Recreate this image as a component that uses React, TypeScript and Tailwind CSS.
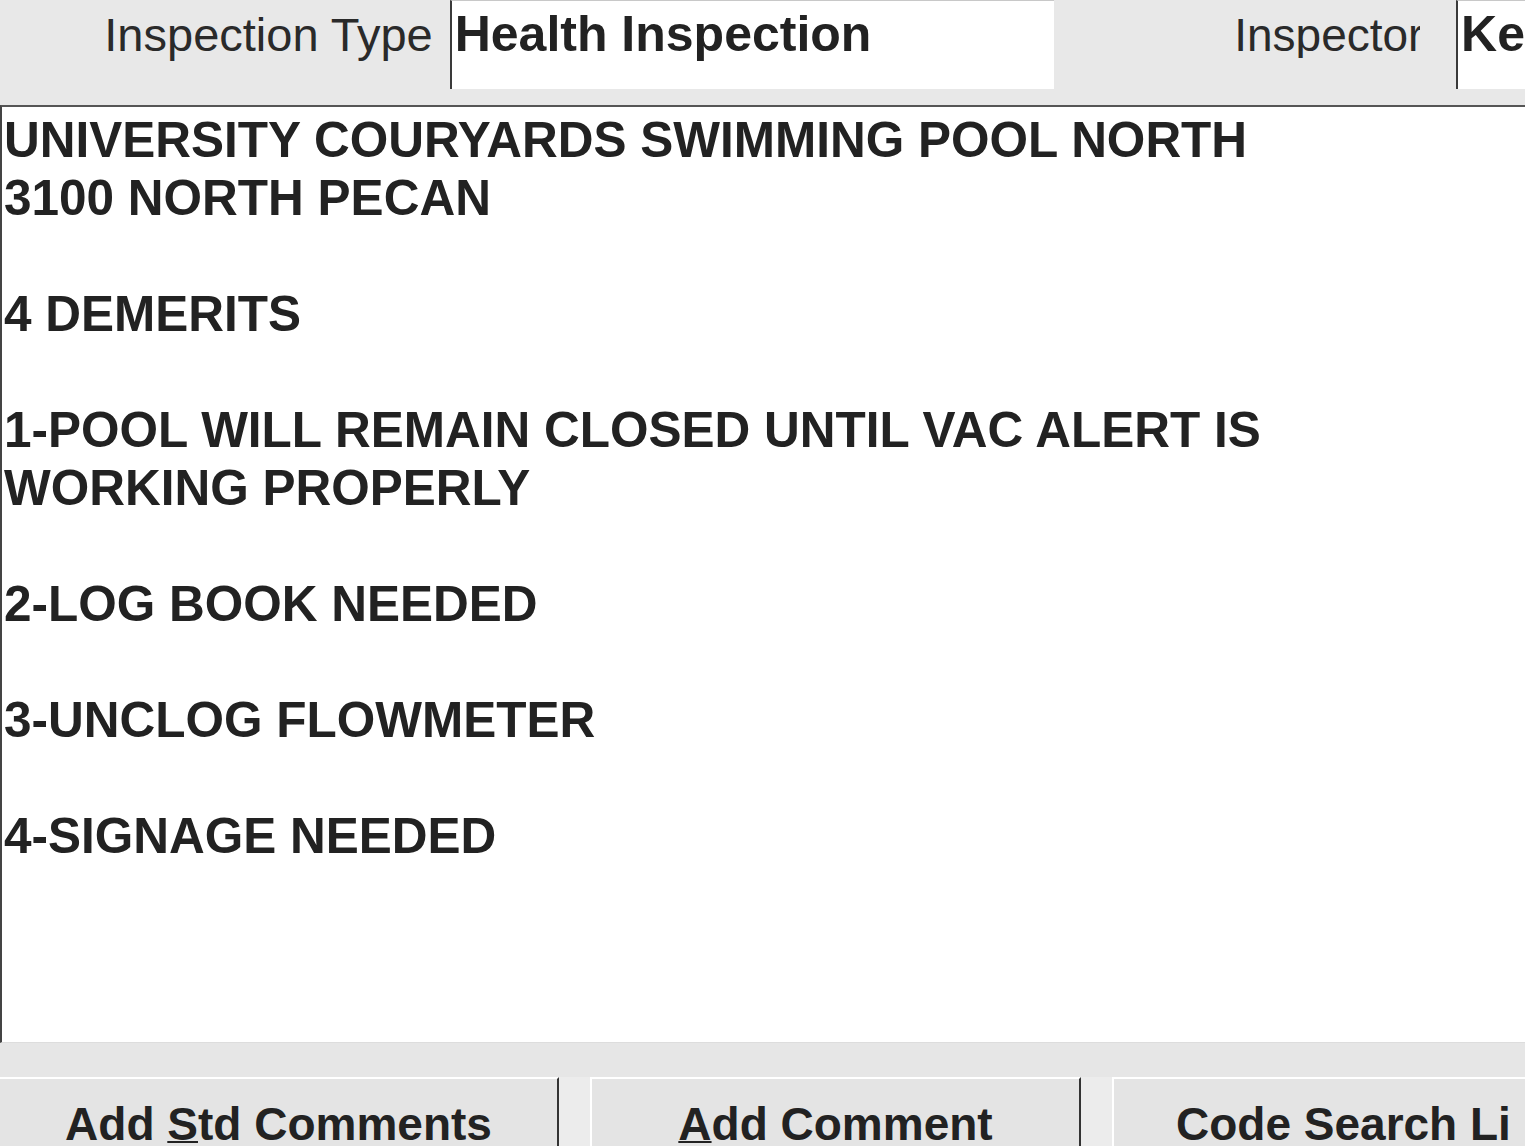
const lines = [
  'UNIVERSITY COURYARDS SWIMMING POOL NORTH',
  '3100 NORTH PECAN',
  '',
  '4 DEMERITS',
  '',
  '1-POOL WILL REMAIN CLOSED UNTIL VAC ALERT IS',
  'WORKING PROPERLY',
  '',
  '2-LOG BOOK NEEDED',
  '',
  '3-UNCLOG FLOWMETER',
  '',
  '4-SIGNAGE NEEDED',
];

const App = () => {
  return (
    <div className="w-[1525px] h-[1146px] overflow-hidden bg-[#e8e8e8] flex flex-col font-['Liberation_Sans',Arial,sans-serif] text-[#222]">
      <div className="h-[105px] flex items-start shrink-0">
        <div className="w-[450px] pr-[17px] pt-[12px] text-right text-[47px] leading-[46px] whitespace-nowrap text-[#2a2a2a]">
          Inspection Type
        </div>
        <div className="w-[605px] h-[89px] bg-white border-l-2 border-l-[#3a3a3a] border-t border-t-[#c8c8c8] pl-[3px] pt-[9px] text-[50px] leading-[49px] font-bold whitespace-nowrap">
          Health Inspection
        </div>
        <div className="ml-[180px] w-[186px] overflow-hidden pt-[12px] text-[46px] leading-[46px] whitespace-nowrap text-[#2a2a2a]">
          Inspector
        </div>
        <div className="ml-[36px] flex-1 h-[89px] bg-white border-l-2 border-l-[#3a3a3a] border-t border-t-[#c8c8c8] pl-[3px] pt-[9px] text-[50px] leading-[49px] font-bold whitespace-nowrap">
          Ke
        </div>
      </div>

      <div className="h-[938px] shrink-0 bg-white border-t-2 border-t-[#555] border-l-2 border-l-[#444] border-b border-b-[#ddd] pt-[4px] pl-[2px]">
        {lines.map((line, i) => (
          <div key={i} className="h-[58px] text-[49.5px] leading-[58px] font-bold whitespace-nowrap">
            {line}
          </div>
        ))}
      </div>

      <div className="flex-1 pt-[34px] flex bg-[#e6e6e6]">
        <div className="w-[559px] border-t-2 border-t-white border-r-2 border-r-[#333] bg-[#e4e4e4] flex justify-center pt-[22px] text-[46px] leading-[46px] font-bold whitespace-nowrap">
          <span>Add <span className="underline underline-offset-[1px] decoration-2">S</span>td Comments</span>
        </div>
        <div className="w-[31px] bg-[#ececec]" />
        <div className="w-[491px] border-t-2 border-t-white border-l-2 border-l-white border-r-2 border-r-[#333] bg-[#e4e4e4] flex justify-center pt-[22px] text-[46px] leading-[46px] font-bold whitespace-nowrap">
          <span><span className="underline underline-offset-[1px] decoration-2">A</span>dd Comment</span>
        </div>
        <div className="w-[31px] bg-[#ececec]" />
        <div className="flex-1 border-t-2 border-t-white border-l-2 border-l-white bg-[#e4e4e4] pl-[62px] pt-[22px] text-[46px] leading-[46px] font-bold whitespace-nowrap overflow-hidden">
          Code Search Li
        </div>
      </div>
    </div>
  );
};

export default App;
